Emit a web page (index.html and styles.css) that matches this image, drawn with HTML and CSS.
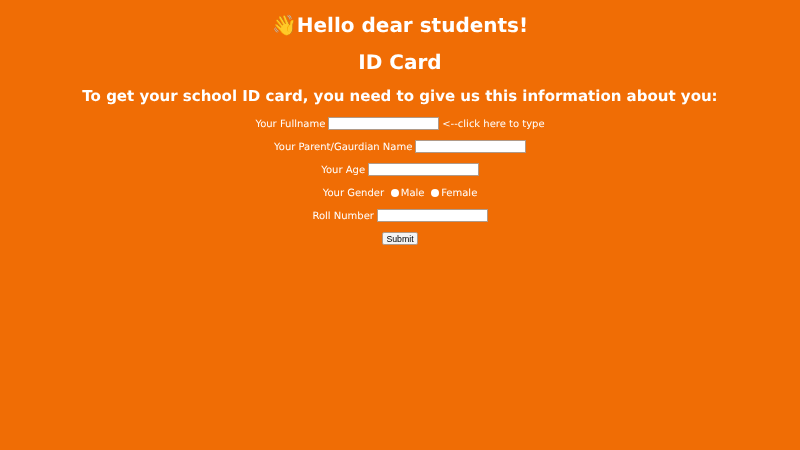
FILE: index.html
```html
<!DOCTYPE html>
<html lang="en">
<head>
<meta charset="utf-8">
<title>ID Card</title>
<link rel="stylesheet" href="styles.css">
</head>
<body class="page">
<h1 class="title">👋Hello dear students!</h1>
<h1 class="subtitle">ID Card</h1>
<h2 class="intro">To get your school ID card, you need to give us this information about you:</h2>
<form class="form">
<p class="row"><label>Your Fullname <input class="field" type="text"></label> &lt;--click here to type</p>
<p class="row"><label>Your Parent/Gaurdian Name <input class="field" type="text"></label></p>
<p class="row"><label>Your Age <input class="field" type="text"></label></p>
<p class="row">Your Gender <input class="radio" type="radio" name="g">Male <input class="radio" type="radio" name="g">Female</p>
<p class="row"><label>Roll Number <input class="field" type="text"></label></p>
<p class="row"><input class="submit" type="submit" value="Submit"></p>
</form>
</body>
</html>
```
FILE: styles.css
```css
html, body { margin: 0; padding: 0; }
.page {
  background: #f06d05;
  color: #fff;
  font-family: "DejaVu Sans", sans-serif;
  text-align: center;
  min-height: 450px;
  font-size: 10px;
  padding-top: 13px;
  text-rendering: geometricPrecision;
}
.title, .subtitle, .intro, .form { filter: blur(0.3px); }
.title { font-size: 20px; margin: 0 0 13px; line-height: 24px; }
.subtitle { font-size: 20px; margin: 0 0 13px; line-height: 24px; }
.intro { font-size: 15px; margin: 0 0 12px; line-height: 18px; }
.row { margin: 0 0 10px; line-height: 16px; height: 13px; }
.field { width: 111px; height: 13px; box-sizing: border-box; background: #fff; border: 1px solid #b09a88; padding: 0; margin: 0 0 0 -0.5px; vertical-align: top; }
.radio { appearance: none; margin: 0 2px 0 3.5px; width: 8px; height: 8px; border-radius: 50%; background: #fff; vertical-align: -0.5px; }
.submit { font-size: 8.75px; font-family: "Liberation Sans", sans-serif; width: 36px; height: 13px; padding: 0; border: 1px solid #b09a88; border-radius: 2px; background: #f4f4f4; color: #000; display: inline-block; vertical-align: top; }
```
